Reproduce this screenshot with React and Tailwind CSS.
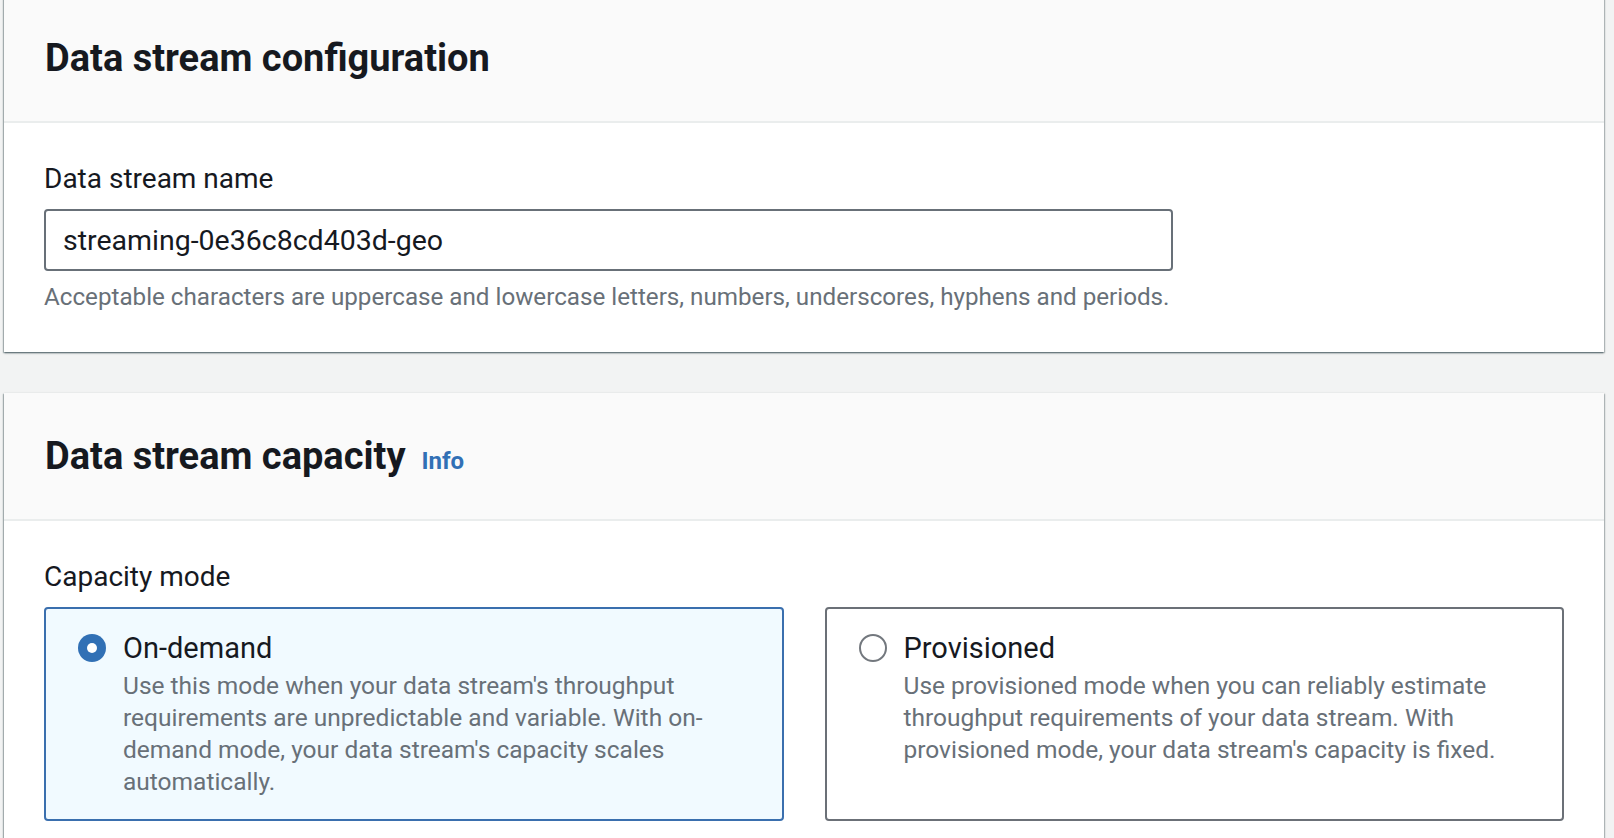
import { useState } from 'react';

const Tile = ({ selected, title, lines, onSelect }) => (
  <div
    onClick={onSelect}
    className={`rounded-[4px] border-2 px-[32px] pt-[19px] pb-[21px] cursor-pointer ${
      selected ? 'border-[#3a6fae] bg-[#f1faff]' : 'border-[#6b7077] bg-white'
    }`}
  >
    <div className="flex items-center gap-[17px]">
      {selected ? (
        <span className="flex items-center justify-center w-[28px] h-[28px] rounded-full bg-[#3170b5] shrink-0">
          <span className="w-[10px] h-[10px] rounded-full bg-white" />
        </span>
      ) : (
        <span className="w-[28px] h-[28px] rounded-full border-2 border-[#73787e] bg-white shrink-0" />
      )}
      <span className="text-[29px] leading-[40px] text-[#16191f]">{title}</span>
    </div>
    <p className="mt-[2px] pl-[45px] text-[24.5px] leading-[32px] text-[#687078]">
      {lines.map((l, i) => (
        <span key={i} className="block">{l}</span>
      ))}
    </p>
  </div>
);

const Card = ({ title, info, children, className = '' }) => (
  <div className={`bg-white shadow-[0_1px_2px_0_rgba(0,28,36,0.5),1px_1px_1px_0_rgba(0,28,36,0.15),-1px_1px_1px_0_rgba(0,28,36,0.2)] ${className}`}>
    <div className="bg-[#fafafa] border-b-2 border-[#eaeded] px-[41px] py-[41px]">
      <h2 className="h-[44px] text-[38px] leading-[44px] font-bold text-[#16191f] whitespace-nowrap">
        {title}
        {info && <span className="ml-[16px] text-[24px] font-bold text-[#3170b5]">Info</span>}
      </h2>
    </div>
    <div className="px-[40px] pt-[36px]">{children}</div>
  </div>
);

const App = () => {
  const [name, setName] = useState('streaming-0e36c8cd403d-geo');
  const [mode, setMode] = useState('on-demand');

  return (
    <div className="min-h-screen bg-[#f2f3f3] font-['Roboto',sans-serif] pl-[4px] pr-[10px] overflow-hidden">
      <Card title="Data stream configuration" className="-mt-[5px] pb-[39px]">
        <label className="block text-[28px] leading-[40px] text-[#16191f] mb-[10px]">Data stream name</label>
        <input
          value={name}
          onChange={(e) => setName(e.target.value)}
          className="block w-[1129px] h-[62px] px-[17px] text-[28.5px] text-[#16191f] border-2 border-[#687078] rounded-[4px] outline-none bg-white"
        />
        <p className="mt-[10px] text-[24.2px] leading-[32px] text-[#687078]">
          Acceptable characters are uppercase and lowercase letters, numbers, underscores, hyphens and periods.
        </p>
      </Card>

      <Card title="Data stream capacity" info className="mt-[41px] pb-[200px]">
        <label className="block text-[28px] leading-[40px] text-[#16191f] mb-[10px]">Capacity mode</label>
        <div className="grid grid-cols-2 gap-[41px]">
          <Tile
            selected={mode === 'on-demand'}
            onSelect={() => setMode('on-demand')}
            title="On-demand"
            lines={[
              "Use this mode when your data stream's throughput",
              'requirements are unpredictable and variable. With on-',
              "demand mode, your data stream's capacity scales",
              'automatically.',
            ]}
          />
          <Tile
            selected={mode === 'provisioned'}
            onSelect={() => setMode('provisioned')}
            title="Provisioned"
            lines={[
              'Use provisioned mode when you can reliably estimate',
              'throughput requirements of your data stream. With',
              "provisioned mode, your data stream's capacity is fixed.",
            ]}
          />
        </div>
      </Card>
    </div>
  );
};

export default App;
